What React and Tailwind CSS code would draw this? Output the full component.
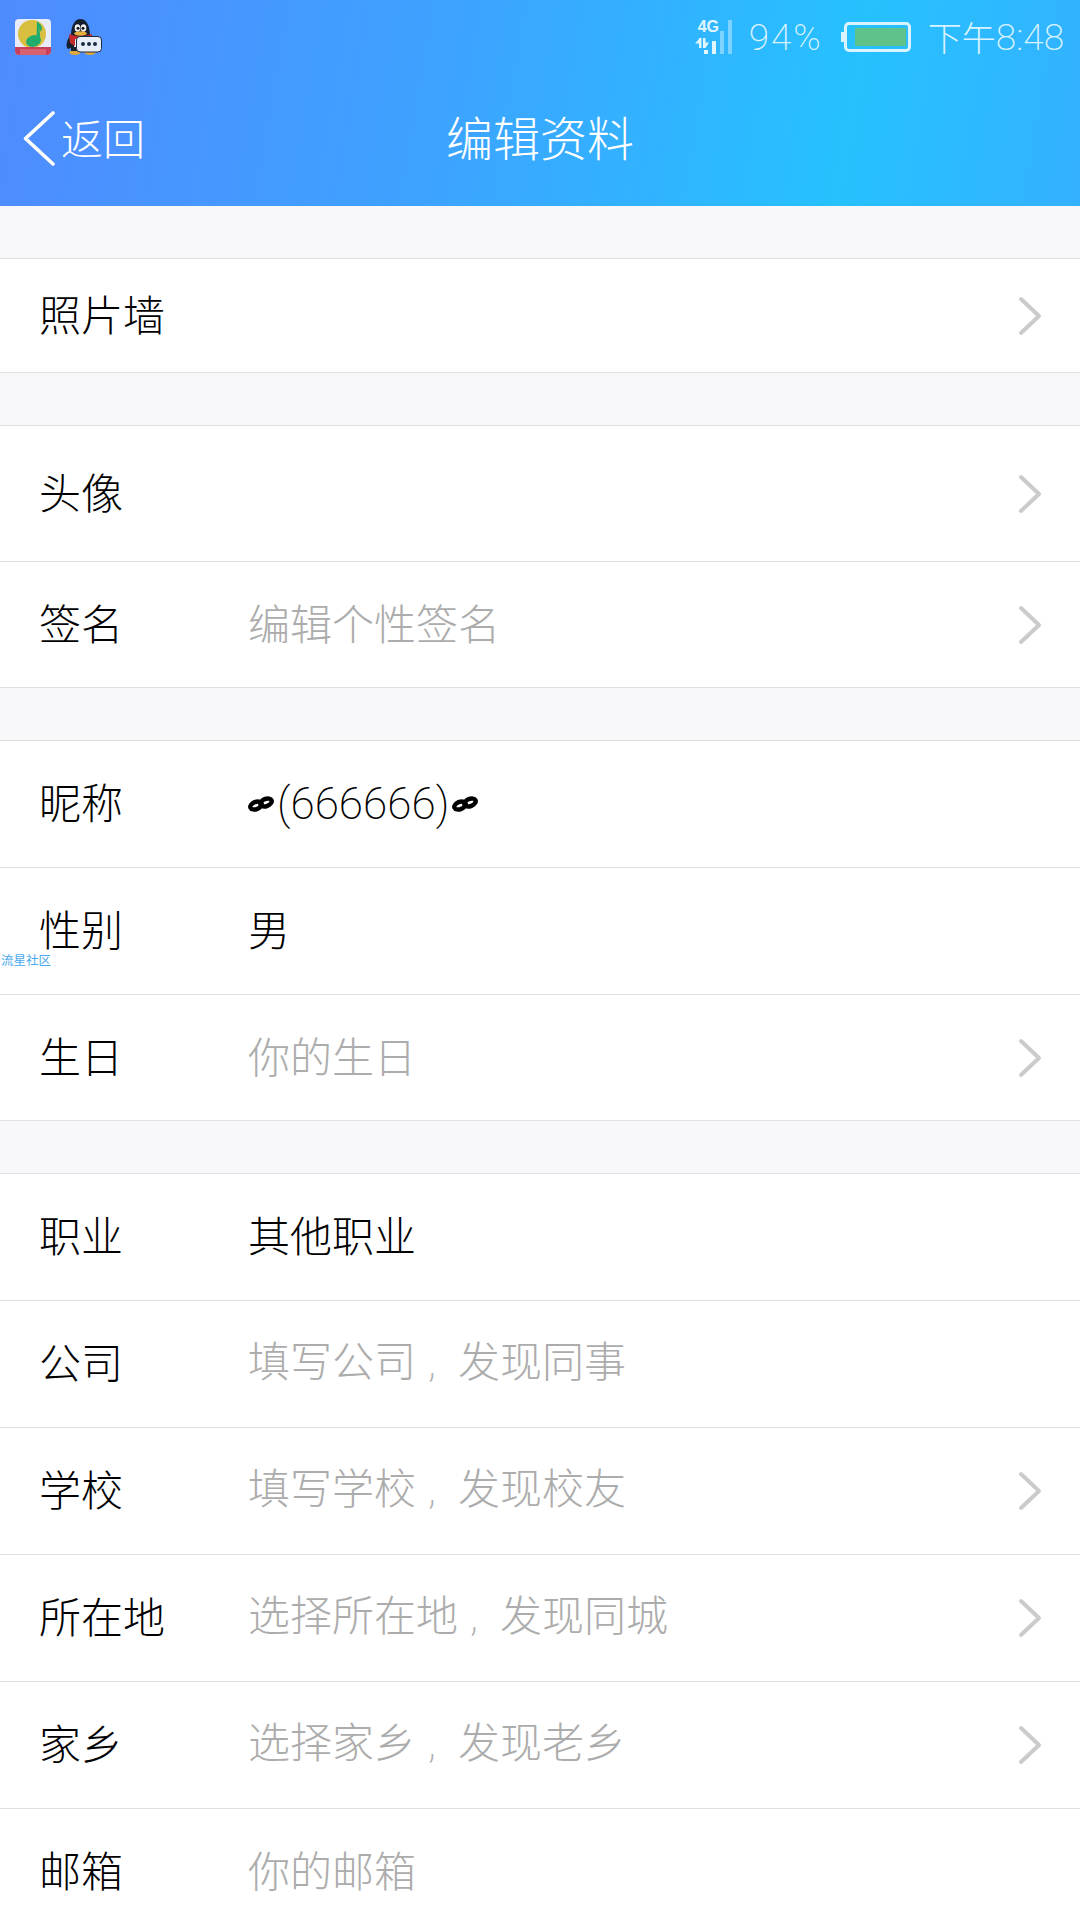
const SANS = "font-['Noto_Sans_CJK_SC','Noto_Sans',sans-serif]";
const NUM = "font-['Roboto','Noto_Sans_CJK_SC',sans-serif]";

function Chevron() {
  return (
    <svg width="24" height="40" viewBox="0 0 24 40" className="shrink-0">
      <path d="M3 3 L21 20 L3 37" fill="none" stroke="#cbcbcb" strokeWidth="4" strokeLinecap="round" strokeLinejoin="round" />
    </svg>
  );
}

function Link() {
  return (
    <svg width="26" height="16" viewBox="0 0 26 16" className="shrink-0">
      <ellipse cx="8" cy="9.5" rx="6" ry="3.6" transform="rotate(-22 8 9.5)" fill="none" stroke="#000" strokeWidth="4.4" />
      <ellipse cx="18" cy="6.5" rx="6" ry="3.6" transform="rotate(-22 18 6.5)" fill="none" stroke="#000" strokeWidth="4.4" />
    </svg>
  );
}

function Comma() {
  return <span className="inline-block w-[42px] pl-[12px] font-['Roboto',sans-serif]">,</span>;
}

function Row({ label, value, hint, chevron, height, children }) {
  return (
    <div className={`flex items-center bg-white border-b border-[#e0e0e3] pl-[39px] pr-[38px] ${height}`}>
      <span className="w-[209px] shrink-0 pb-[6px] text-[42px] leading-none text-black font-extralight">{label}</span>
      {value && <span className="flex-1 pb-[6px] text-[42px] leading-none text-black font-extralight">{value}</span>}
      {hint && <span className="flex-1 pb-[6px] text-[42px] leading-none text-[#acacac] font-extralight">{hint}</span>}
      {children}
      {!value && !hint && !children && <span className="flex-1" />}
      {chevron && <Chevron />}
    </div>
  );
}

function Gap() {
  return <div className="h-[53px] bg-[#f8f8fa] border-b border-[#e0e0e3]" />;
}

function MusicIcon() {
  return (
    <svg width="36" height="36" viewBox="0 0 36 36" className="shrink-0">
      <rect width="36" height="36" rx="4" fill="#e8ecf8" />
      <circle cx="17" cy="15" r="14" fill="#d9bf3f" />
      <path d="M0 28 H36 V32 a4 4 0 0 1 -4 4 H4 a4 4 0 0 1 -4 -4 Z" fill="#c9405c" />
      <path d="M5 30 H31 V36 H5 Z" fill="#d9606f" />
      <ellipse cx="18.5" cy="22" rx="7.5" ry="5.8" transform="rotate(-15 18.5 22)" fill="#20ac6c" />
      <path d="M21.5 22 L22 2 C24 5 29 6 26 13 C25 10 24.5 9.5 24.5 9.5 L25.5 22 Z" fill="#20ac6c" />
    </svg>
  );
}

function Penguin() {
  return (
    <svg width="36" height="36" viewBox="0 0 36 36" className="shrink-0">
      <ellipse cx="9" cy="33.5" rx="5.5" ry="2.5" fill="#e0a93a" />
      <ellipse cx="24" cy="33.5" rx="5.5" ry="2.5" fill="#e0a93a" />
      <path d="M2 30 C-1 27 1 21 4 17 L7 16 L7 28 Z" fill="#16202f" />
      <path d="M5 17 C5 6 9 0 14.5 0 C20 0 24 6 24 17 L26 32 H5 Z" fill="#16202f" />
      <path d="M8 28 V18 H24 V28 Z" fill="#f1f3f6" />
      <path d="M3 15 C8 17.5 20 17.5 26 15 L26 19 C20 21 12 21 9 20 L9 27 L4 24 Z" fill="#c7282c" />
      <ellipse cx="11.5" cy="9" rx="2.8" ry="3.8" fill="#f4f6f8" />
      <ellipse cx="17.5" cy="9" rx="2.8" ry="3.8" fill="#f4f6f8" />
      <circle cx="12" cy="9.2" r="1.5" fill="#111" />
      <circle cx="17" cy="9.2" r="1.5" fill="#111" />
      <ellipse cx="14.5" cy="14.5" rx="6.5" ry="2.2" fill="#e7ae3c" />
      <rect x="10.5" y="17.5" width="25" height="15.5" rx="3.5" fill="#e8eef9" stroke="#1d2b40" strokeWidth="1" />
      <circle cx="17" cy="25" r="2" fill="#1d2b40" />
      <circle cx="23" cy="25" r="2" fill="#1d2b40" />
      <circle cx="29" cy="25" r="2" fill="#1d2b40" />
    </svg>
  );
}

function Signal() {
  return (
    <div className="relative w-[37px] h-[34px] shrink-0">
      <span className="absolute left-[3px] top-[-2px] w-[21px] text-center text-[16px] leading-[17px] font-bold text-[#e0f6ff] font-['Liberation_Sans',sans-serif]">4G</span>
      <svg width="37" height="34" viewBox="0 0 37 34" className="absolute inset-0">
        <path d="M0 23.5 L4 19 V18 H6.5 V28 H4 V23.5 Z M8 18 H10.5 L10.5 22.5 H14 L10.5 28 H8 Z" fill="#e0f6ff" />
        <rect x="9" y="30" width="4" height="4" fill="#e0f6ff" />
        <rect x="17" y="21" width="4" height="13" fill="#e0f6ff" />
        <rect x="25" y="11" width="4" height="23" fill="#e0f6ff" opacity="0.45" />
        <rect x="33" y="0" width="4" height="34" fill="#e0f6ff" opacity="0.45" />
      </svg>
    </div>
  );
}

function Battery() {
  return (
    <div className="flex items-center shrink-0">
      <div className="w-[3px] h-[10px] bg-[#d9f3ff]" />
      <div className="w-[67px] h-[30px] rounded-[5px] border-[3px] border-[#d9f3ff] py-[3px] pl-[8px] pr-[2px]">
        <div className="w-full h-full bg-[#5ec28a]" />
      </div>
    </div>
  );
}

export default function App() {
  return (
    <div className={`w-[1080px] h-[1920px] overflow-hidden bg-white ${SANS}`}>
      <div className="h-[206px] bg-[linear-gradient(100deg,#4f8bff_0%,#3ea2ff_40%,#26c1ff_78%,#34b1ff_100%)] flex flex-col">
        <div className="h-[74px] flex items-center pl-[15px] pr-[16px]">
          <MusicIcon />
          <div className="w-[15px]" />
          <Penguin />
          <div className="flex-1" />
          <Signal />
          <span className={`ml-[17px] text-[37px] leading-none font-extralight text-[#d9f3ff] tracking-[2px] ${NUM}`}>94%</span>
          <div className="ml-[18px]"><Battery /></div>
          <span className={`ml-[17px] flex items-center leading-none font-extralight text-[#d9f3ff] ${NUM}`}>
            <span className={`text-[34px] ${SANS}`}>下午</span>
            <span className="text-[37px]">8:48</span>
          </span>
        </div>
        <div className="relative flex-1 flex items-center justify-center">
          <div className="absolute left-[23px] top-[34px] flex items-center">
            <svg width="34" height="60" viewBox="0 0 34 60" className="shrink-0">
              <path d="M30 5 L2.5 30.5 L30 56" fill="none" stroke="#fff" strokeWidth="3.6" strokeLinecap="round" strokeLinejoin="round" />
            </svg>
            <span className="ml-[4px] pb-[3px] text-[42px] leading-none font-extralight text-white">返回</span>
          </div>
          <span className="text-[47px] leading-none font-extralight text-white pb-[9px]">编辑资料</span>
        </div>
      </div>

      <Gap />
      <Row label="照片墙" chevron height="h-[114px]" />
      <Gap />
      <Row label="头像" chevron height="h-[136px]" />
      <Row label="签名" hint="编辑个性签名" chevron height="h-[126px]" />
      <Gap />
      <Row label="昵称" height="h-[127px]">
        <span className="flex-1 flex items-center text-black">
          <Link />
          <span className={`mx-[3px] text-[44px] leading-none font-extralight ${NUM}`}>(666666)</span>
          <Link />
        </span>
      </Row>
      <div className="relative">
        <Row label="性别" value="男" height="h-[127px]" />
        <span className="absolute left-[1px] top-[86px] text-[12.5px] leading-none text-[#4aa9ee]">流星社区</span>
      </div>
      <Row label="生日" hint="你的生日" chevron height="h-[126px]" />
      <Gap />
      <Row label="职业" value="其他职业" height="h-[127px]" />
      <Row label="公司" hint={<>填写公司<Comma />发现同事</>} height="h-[127px]" />
      <Row label="学校" hint={<>填写学校<Comma />发现校友</>} chevron height="h-[127px]" />
      <Row label="所在地" hint={<>选择所在地<Comma />发现同城</>} chevron height="h-[127px]" />
      <Row label="家乡" hint={<>选择家乡<Comma />发现老乡</>} chevron height="h-[127px]" />
      <Row label="邮箱" hint="你的邮箱" height="h-[127px]" />
    </div>
  );
}
